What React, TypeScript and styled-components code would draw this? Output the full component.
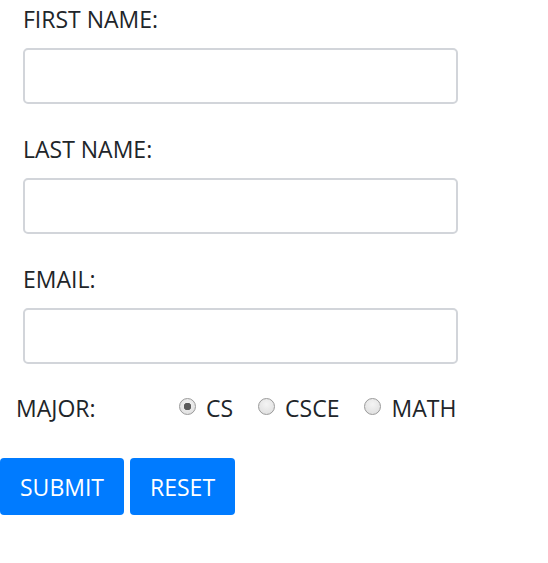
import React from "react";
import styled, { createGlobalStyle } from "styled-components";

const Global = createGlobalStyle`
  html, body { margin: 0; padding: 0; background: #fff; }
  body { font-family: "Open Sans", "Noto Sans", sans-serif; color: #212529; }
`;

const Form = styled.form`
  display: flex;
  flex-direction: column;
  width: 548px;
`;

const Field = styled.div`
  display: flex;
  flex-direction: column;
  padding: 4px 0 0 23px;
  margin-bottom: 26px;
`;

const Label = styled.label`
  font-size: 23px;
  line-height: 30px;
  margin-bottom: 14px;
`;

const Input = styled.input`
  box-sizing: border-box;
  width: 435px;
  height: 56px;
  border: 2px solid #d2d5da;
  border-radius: 5px;
  outline: none;
  padding: 6px 12px;
  font-size: 20px;
  font-family: inherit;
`;

const MajorRow = styled.div`
  display: flex;
  align-items: center;
  padding-left: 16px;
  margin-top: 3px;
  height: 30px;
  font-size: 23px;
  line-height: 30px;
`;

const MajorLabel = styled.span`
  width: 163px;
`;

const Option = styled.label`
  display: flex;
  align-items: center;
  gap: 10px;
  margin-right: 25px;
`;

const Radio = styled.input.attrs({ type: "radio" })`
  appearance: none;
  margin: 0;
  width: 17px;
  height: 17px;
  border-radius: 50%;
  border: 1px solid #9a9a9a;
  background: radial-gradient(circle at 50% 35%, #f4f4f4 0%, #dcdcdc 100%);
  position: relative;
  top: -2px;
  &:checked {
    background: radial-gradient(circle, #5c5c5c 0 3.5px, transparent 4px),
      radial-gradient(circle at 50% 35%, #f4f4f4 0%, #dcdcdc 100%);
  }
`;

const Buttons = styled.div`
  display: flex;
  gap: 6px;
  margin-top: 35px;
`;

const Button = styled.button`
  height: 57px;
  padding: 0 20px;
  border: none;
  border-radius: 4px;
  background: #007bff;
  color: #fff;
  font-size: 23px;
  font-family: inherit;
`;

export default function App() {
  return (
    <>
      <Global />
      <Form onSubmit={(e) => e.preventDefault()}>
        <Field>
          <Label>FIRST NAME:</Label>
          <Input type="text" />
        </Field>
        <Field>
          <Label>LAST NAME:</Label>
          <Input type="text" />
        </Field>
        <Field>
          <Label>EMAIL:</Label>
          <Input type="email" />
        </Field>
        <MajorRow>
          <MajorLabel>MAJOR:</MajorLabel>
          <Option>
            <Radio name="major" defaultChecked />
            CS
          </Option>
          <Option>
            <Radio name="major" />
            CSCE
          </Option>
          <Option>
            <Radio name="major" />
            MATH
          </Option>
        </MajorRow>
        <Buttons>
          <Button type="submit">SUBMIT</Button>
          <Button type="reset">RESET</Button>
        </Buttons>
      </Form>
    </>
  );
}
